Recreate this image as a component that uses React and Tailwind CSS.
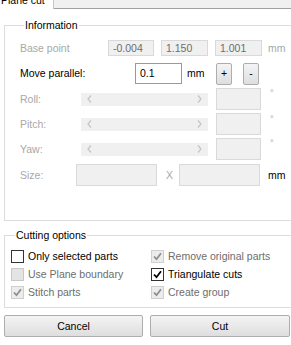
import React from 'react';

const box = 'box-border border border-[#d9d9d9] bg-[#f0f0f0]';

function Chevron({ dir }) {
  return (
    <svg width="5" height="8" viewBox="0 0 5 8" className="shrink-0">
      <path
        d={dir === 'left' ? 'M4 0.5 L1 4 L4 7.5' : 'M1 0.5 L4 4 L1 7.5'}
        fill="none"
        stroke="#c4c4c4"
        strokeWidth="1.2"
      />
    </svg>
  );
}

function AngleRow({ label, h }) {
  return (
    <div className={`flex items-center ${h}`}>
      <div className="w-[61px] text-[#a8a8a8]">{label}</div>
      <div className="w-[127px] h-[13px] bg-[#f0f0f0] flex items-center justify-between px-[6px]">
        <Chevron dir="left" />
        <Chevron dir="right" />
      </div>
      <div className={`ml-[8px] w-[45px] h-[22px] ${box}`} />
      <div className="ml-[9px] self-start mt-[1px] text-[#a8a8a8] text-[9px]">°</div>
    </div>
  );
}

function Check({ checked, disabled }) {
  const cls = disabled
    ? checked
      ? 'border-[#cfcfcf] bg-[#ececec]'
      : 'border-[#c8c8c8] bg-[#e4e4e4]'
    : 'border-[#333333] bg-white';
  return (
    <div className={`box-border w-[13px] h-[13px] border ${cls} flex items-center justify-center`}>
      {checked && (
        <svg width="9" height="9" viewBox="0 0 9 9">
          <path
            d="M1 4.5 L3.5 7.2 L8 1.2"
            fill="none"
            stroke={disabled ? '#8e8e8e' : '#000000'}
            strokeWidth="1.8"
          />
        </svg>
      )}
    </div>
  );
}

function Option({ label, checked, disabled, width }) {
  return (
    <div className={`flex items-center ${width}`}>
      <Check checked={checked} disabled={disabled} />
      <span className={`ml-[4px] ${disabled ? 'text-[#6d6d6d]' : 'text-black'}`}>{label}</span>
    </div>
  );
}

const btn =
  'box-border h-[22px] border border-[#adadad] rounded-[2px] bg-gradient-to-b from-[#f4f4f4] to-[#dedede] flex items-center justify-center text-black';

export default function App() {
  return (
    <div className="w-[291px] h-[345px] overflow-hidden bg-white font-['Liberation_Sans',Arial,sans-serif] text-[10.5px] leading-[13px] text-black">
      {/* tabs */}
      <div className="flex h-[9px]">
        <div className="w-[54px] border-r border-[#c8c8c8] overflow-hidden">
          <div className="ml-[1px] -mt-[6px] leading-[13px] whitespace-nowrap">Plane cut</div>
        </div>
        <div className="flex-1 bg-[#f0f0f0] border-b border-[#a0a0a0]" />
      </div>

      {/* Information */}
      <fieldset className="ml-[4px] mt-[10px] w-[300px] h-[202px] border border-[#dcdcdc] pl-[15px]">
        <legend className="ml-[4px] px-[1px] leading-[13px]">Information</legend>

        <div className="flex items-center h-[26px] mt-[3px]">
          <div className="w-[88px] text-[#a8a8a8]">Base point</div>
          <div className={`w-[46px] h-[16px] ${box} flex items-center pl-[4px] text-[#6d6d6d]`}>-0.004</div>
          <div className={`ml-[7px] w-[47px] h-[16px] ${box} flex items-center pl-[4px] text-[#6d6d6d]`}>1.150</div>
          <div className={`ml-[7px] w-[47px] h-[16px] ${box} flex items-center pl-[4px] text-[#6d6d6d]`}>1.001</div>
          <div className="ml-[6px] text-[#a8a8a8]">mm</div>
        </div>

        <div className="flex items-center h-[25px]">
          <div className="w-[115px]">Move parallel:</div>
          <div className="box-border w-[47px] h-[21px] border border-[#9a9a9a] bg-white flex items-center pl-[4px]">0.1</div>
          <div className="ml-[5px] w-[29px]">mm</div>
          <div className={`${btn} w-[16px] h-[19px]`}>+</div>
          <div className={`${btn} ml-[11px] w-[16px] h-[19px]`}>-</div>
        </div>

        <AngleRow label="Roll:" h="h-[26px]" />
        <AngleRow label="Pitch:" h="h-[24px]" />
        <AngleRow label="Yaw:" h="h-[26px]" />

        <div className="flex items-center h-[26px]">
          <div className="w-[56px] text-[#a8a8a8]">Size:</div>
          <div className={`w-[81px] h-[22px] ${box}`} />
          <div className="ml-[9px] w-[13px] text-[#a8a8a8]">X</div>
          <div className={`w-[81px] h-[22px] ${box}`} />
          <div className="ml-[8px]">mm</div>
        </div>
      </fieldset>

      {/* Cutting options */}
      <fieldset className="ml-[4px] mt-[8px] w-[300px] h-[79px] border border-[#dcdcdc] pl-[6px]">
        <legend className="ml-[4px] px-[1px] leading-[13px]">Cutting options</legend>
        <div className="flex items-center h-[18px] mt-[5px]">
          <Option label="Only selected parts" width="w-[140px]" />
          <Option label="Remove original parts" checked disabled />
        </div>
        <div className="flex items-center h-[18px]">
          <Option label="Use Plane boundary" disabled width="w-[140px]" />
          <Option label="Triangulate cuts" checked />
        </div>
        <div className="flex items-center h-[18px]">
          <Option label="Stitch parts" checked disabled width="w-[140px]" />
          <Option label="Create group" checked disabled />
        </div>
      </fieldset>

      {/* buttons */}
      <div className="flex mt-[7px] pl-[4px]">
        <div className={`${btn} w-[139px]`}>Cancel</div>
        <div className={`${btn} ml-[7px] w-[140px]`}>Cut</div>
      </div>
    </div>
  );
}
